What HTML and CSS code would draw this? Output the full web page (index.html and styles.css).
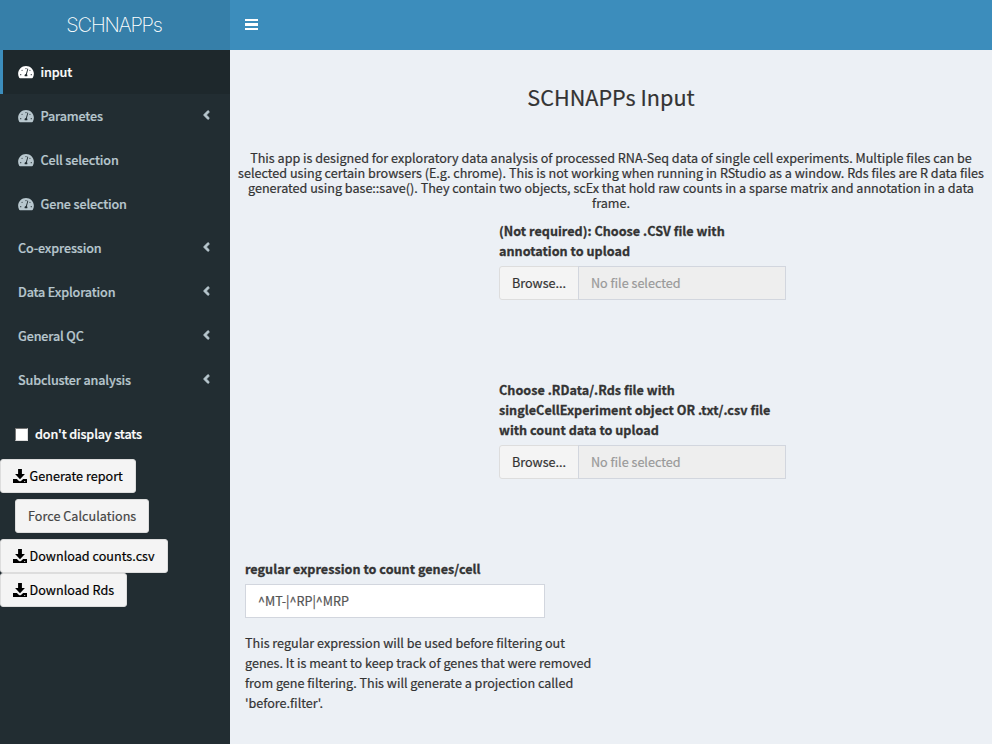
FILE: index.html
```html
<!DOCTYPE html>
<html lang="en">
<head>
<meta charset="utf-8">
<title>SCHNAPPs</title>
<link rel="stylesheet" href="styles.css">
</head>
<body>
<svg class="defs" width="0" height="0">
  <symbol id="gauge" viewBox="0 0 576 512"><path d="M288 32C128.94 32 0 160.94 0 320c0 52.8 14.25 102.26 39.06 144.8 5.61 9.62 16.3 15.2 27.44 15.2h443c11.14 0 21.83-5.58 27.44-15.2C561.75 422.26 576 372.8 576 320c0-159.06-128.94-288-288-288zm0 76a22 22 0 1 1 0 44 22 22 0 1 1 0-44zM96 374a22 22 0 1 1 0-44 22 22 0 1 1 0 44zm48-160a22 22 0 1 1 0-44 22 22 0 1 1 0 44zm226-64l-50 190C334 349 340 364 340 384c0 11-3 22-8 28H244c-5-6-8-17-8-28 0-30 20-52 48-56l54-186c8-18 36-10 32 8zm62 64a22 22 0 1 1 0-44 22 22 0 1 1 0 44zm48 160a22 22 0 1 1 0-44 22 22 0 1 1 0 44z"/></symbol>
  <symbol id="download" viewBox="0 0 512 512"><path d="M186 0h140v180h110L256 372 76 180h110zM0 364h140l79 71c20 18 54 18 74 0l79-71h140v148H0zM404 452v20h44v-20z"/></symbol>
  <symbol id="angle" viewBox="0 0 256 512"><path d="M31.7 239l136-136c9.4-9.4 24.6-9.4 33.9 0l22.6 22.6c9.4 9.4 9.4 24.6 0 33.9L127.9 256l96.4 96.4c9.4 9.4 9.4 24.6 0 33.9L201.7 409c-9.4 9.4-24.6 9.4-33.9 0l-136-136c-9.5-9.4-9.5-24.6-.1-34z"/></symbol>
</svg>
<header class="header">
  <div class="logo">SCHNAPPs</div>
  <nav class="navbar"><div class="toggle"><i></i><i></i><i></i></div></nav>
</header>
<div class="wrapper">
  <aside class="sidebar">
    <ul class="menu">
      <li class="active"><svg class="gauge"><use href="#gauge"/></svg><span>input</span></li>
      <li><svg class="gauge"><use href="#gauge"/></svg><span>Parametes</span><svg class="angle"><use href="#angle"/></svg></li>
      <li><svg class="gauge"><use href="#gauge"/></svg><span>Cell selection</span></li>
      <li><svg class="gauge"><use href="#gauge"/></svg><span>Gene selection</span></li>
      <li><span>Co-expression</span><svg class="angle"><use href="#angle"/></svg></li>
      <li><span>Data Exploration</span><svg class="angle"><use href="#angle"/></svg></li>
      <li><span>General QC</span><svg class="angle"><use href="#angle"/></svg></li>
      <li><span>Subcluster analysis</span><svg class="angle"><use href="#angle"/></svg></li>
    </ul>
    <div class="check"><span class="box"></span><span>don't display stats</span></div>
    <div class="buttons">
      <div class="btn report"><svg class="dl"><use href="#download"/></svg><span>Generate report</span></div>
      <div class="btn force"><span>Force Calculations</span></div>
      <div class="btn counts"><svg class="dl"><use href="#download"/></svg><span>Download counts.csv</span></div>
      <div class="btn rds"><svg class="dl"><use href="#download"/></svg><span>Download Rds</span></div>
    </div>
  </aside>
  <main class="content">
    <h1 class="title">SCHNAPPs Input</h1>
    <p class="intro">This app is designed for exploratory data analysis of processed RNA-Seq data of single cell experiments. Multiple files can be<br>selected using certain browsers (E.g. chrome). This is not working when running in RStudio as a window. Rds files are R data files<br>generated using base::save(). They contain two objects, scEx that hold raw counts in a sparse matrix and annotation in a data<br>frame.</p>
    <section class="upload first">
      <label>(Not required): Choose .CSV file with<br>annotation to upload</label>
      <div class="file"><span class="browse">Browse...</span><span class="name">No file selected</span></div>
    </section>
    <section class="upload second">
      <label>Choose .RData/.Rds file with<br>singleCellExperiment object OR .txt/.csv file<br>with count data to upload</label>
      <div class="file"><span class="browse">Browse...</span><span class="name">No file selected</span></div>
    </section>
    <section class="regex">
      <label>regular expression to count genes/cell</label>
      <div class="input">^MT-|^RP|^MRP</div>
      <p class="help">This regular expression will be used before filtering out<br>genes. It is meant to keep track of genes that were removed<br>from gene filtering. This will generate a projection called<br>'before.filter'.</p>
    </section>
  </main>
</div>
</body>
</html>
```
FILE: styles.css
```css
* { box-sizing: border-box; }
body {
  margin: 0;
  height: 744px;
  overflow: hidden;
  background: #ecf0f5;
  color: #333;
  font: 12.6px/20px "Noto Sans CJK SC", "Open Sans", sans-serif;
  -webkit-text-stroke: 0.2px currentColor;
  white-space: nowrap;
}
svg { fill: currentColor; flex: none; }
.defs { display: none; }
.header { display: flex; height: 50px; background: #3c8dbc; color: #fff; }
.logo {
  width: 230px;
  padding-right: 2px;
  background: #367fa9;
  text-align: center;
  font: 200 20px/50px "Inter", "Liberation Sans", sans-serif;
  letter-spacing: -1.2px;
  -webkit-text-stroke: 0;
}
.navbar { padding: 19px 15px; }
.toggle { display: flex; flex-direction: column; justify-content: space-between; width: 13px; height: 11px; }
.toggle i { height: 2px; background: #fff; }
.toggle i:nth-child(2) { height: 3px; }
.wrapper { display: flex; height: 694px; }
.sidebar { width: 230px; background: #222d32; color: #b8c7ce; }
.menu { list-style: none; margin: 0; padding: 0; font-weight: 500; letter-spacing: -0.15px; }
.menu li { display: flex; align-items: center; height: 44px; padding: 0 18px 0 15px; border-left: 3px solid transparent; }
.menu .active { background: #1e282c; border-left-color: #3c8dbc; color: #fff; }
.gauge { width: 16px; height: 14px; margin-right: 6.5px; }
.angle { width: 7px; height: 14px; margin: 0 2px 3px auto; stroke: currentColor; stroke-width: 24px; }
.check { display: flex; align-items: center; gap: 7px; margin: 22px 0 15px 15px; color: #fff; font-weight: 500; letter-spacing: -0.15px; }
.box { width: 13px; height: 13px; background: #fff; border: 1px solid #767676; border-right-color: #ddd; border-bottom-color: #ddd; }
.btn {
  display: flex;
  align-items: center;
  gap: 2.5px;
  height: 34px;
  padding: 0 12px;
  background: #f4f4f4;
  border: 1px solid #ddd;
  border-radius: 3px;
  color: #000;
  letter-spacing: 0.03px;
}
.dl { width: 14px; height: 14px; }
.report { width: 136px; }
.force { width: 134px; margin: 6px 0 6px 15px; color: #444; }
.counts { width: 168px; }
.rds { width: 127px; }
.content { width: 762px; }
.title { margin: 32px 0 0; text-align: center; font-size: 21.6px; font-weight: 400; line-height: 30px; }
.intro { margin: 38px 0 0; text-align: center; line-height: 15px; }
label { display: block; font-weight: 700; letter-spacing: 0.03px; -webkit-text-stroke-width: 0.3px; }
.upload { margin-left: 269px; width: 287px; }
.first { margin-top: 11px; }
.second { margin-top: 80px; }
.file { display: flex; height: 34px; margin-top: 5px; line-height: 32px; }
.browse { width: 80px; padding-left: 12px; background: #f4f4f4; border: 1px solid #ddd; border-radius: 3px 0 0 3px; }
.name { flex: 1; margin-left: -1px; padding-left: 12px; background: #eee; border: 1px solid #d2d6de; color: #999; }
.regex { margin: 80px 0 0 15px; }
.input { width: 300px; height: 34px; margin-top: 5px; padding-left: 12px; background: #fff; border: 1px solid #d2d6de; color: #555; line-height: 32px; }
.help { margin: 15px 0 0; }
```
